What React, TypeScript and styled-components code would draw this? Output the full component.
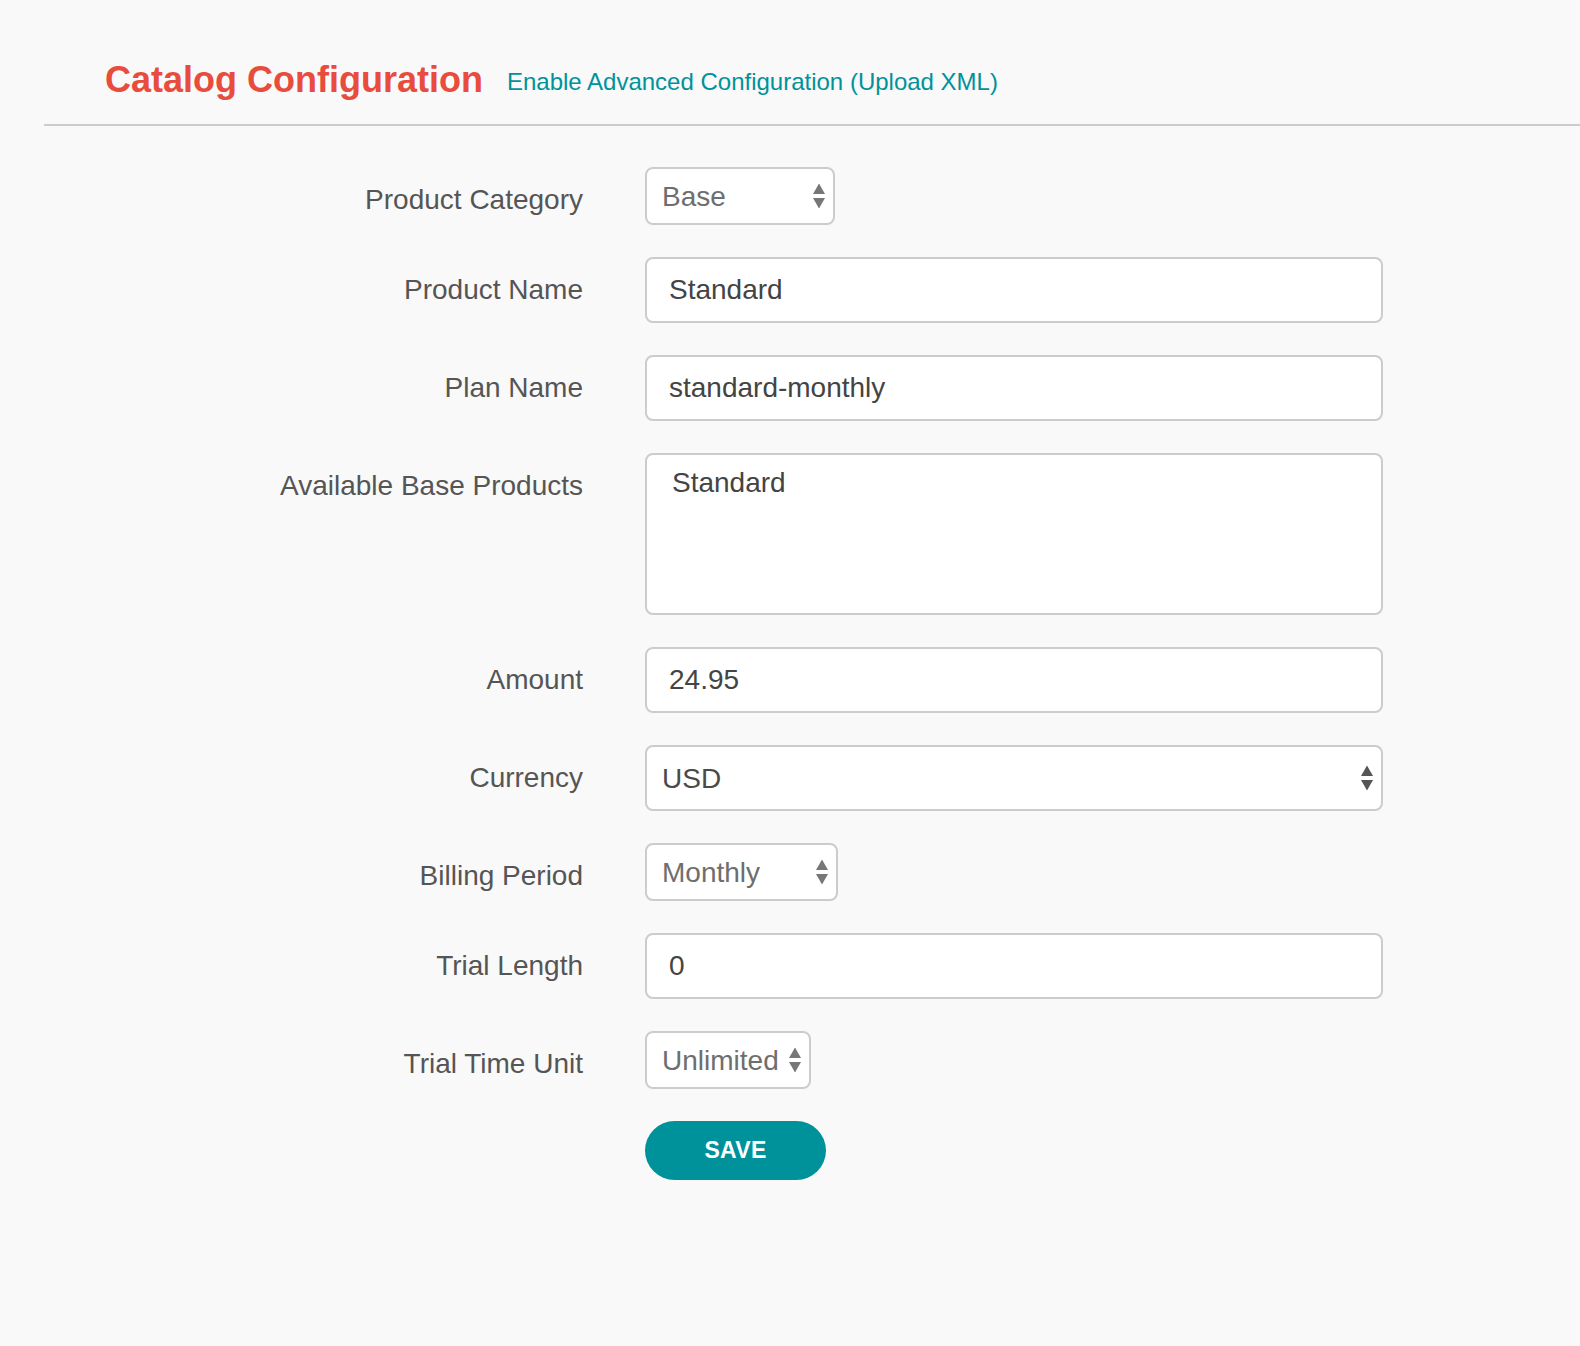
import React from "react";
import styled, { createGlobalStyle } from "styled-components";

const GlobalStyle = createGlobalStyle`
  html, body {
    margin: 0;
    padding: 0;
    background: #f9f9f9;
  }
  body {
    font-family: "Liberation Sans", Arial, Helvetica, sans-serif;
    -webkit-font-smoothing: antialiased;
  }
  * { box-sizing: border-box; }
`;

const Page = styled.div`
  min-height: 1346px;
  padding-left: 44px;
  background: #f9f9f9;
`;

const Header = styled.header`
  display: flex;
  align-items: flex-start;
  gap: 24px;
  padding: 60px 0 22px 61px;
  border-bottom: 2px solid #cccccc;
`;

const Title = styled.h1`
  margin: 0;
  font-size: 36px;
  line-height: 40px;
  font-weight: 700;
  color: #e74c3c;
`;

const AdvancedLink = styled.a`
  padding-top: 2px;
  font-size: 24px;
  line-height: 40px;
  color: #00929a;
  text-decoration: none;
  cursor: pointer;
`;

const Form = styled.form`
  display: flex;
  flex-direction: column;
  gap: 32px;
  padding-top: 41px;
`;

const Row = styled.div`
  display: grid;
  grid-template-columns: 539px 738px;
  column-gap: 62px;
  align-items: start;
`;

const Label = styled.label`
  text-align: right;
  font-size: 28px;
  line-height: 40px;
  padding-top: 13px;
  color: #555555;
`;

const TextInput = styled.input`
  display: block;
  width: 100%;
  height: 66px;
  padding: 0 22px;
  border: 2px solid #cccccc;
  border-radius: 8px;
  background: #ffffff;
  font-family: inherit;
  font-size: 28px;
  color: #444444;
  outline: none;
`;

const SelectWrap = styled.div<{ $width?: number }>`
  position: relative;
  width: ${(p) => (p.$width ? `${p.$width}px` : "100%")};
`;

const Select = styled.select<{ $tall?: boolean; $dark?: boolean }>`
  appearance: none;
  -webkit-appearance: none;
  display: block;
  width: 100%;
  height: ${(p) => (p.$tall ? "66px" : "58px")};
  padding: 0 26px 0 15px;
  border: 2px solid #cccccc;
  border-radius: 8px;
  background: #ffffff;
  font-family: inherit;
  font-size: 28px;
  color: ${(p) => (p.$dark ? "#4a4a4a" : "#6e6e6e")};
  outline: none;
`;

const Arrows = styled.svg<{ $right: number }>`
  position: absolute;
  top: 50%;
  right: ${(p) => p.$right}px;
  transform: translateY(-50%);
  pointer-events: none;
`;

const ListBox = styled.div`
  height: 162px;
  padding: 11px 25px;
  border: 2px solid #cccccc;
  border-radius: 8px;
  background: #ffffff;
`;

const ListOption = styled.div`
  font-size: 28px;
  line-height: 34px;
  color: #444444;
`;

const SaveButton = styled.button`
  width: 181px;
  height: 59px;
  border: none;
  border-radius: 30px;
  background: #00929a;
  color: #ffffff;
  font-family: inherit;
  font-size: 23px;
  font-weight: 700;
  letter-spacing: 0.3px;
  cursor: pointer;
`;

const SelectArrows = ({ color, right }: { color: string; right: number }) => (
  <Arrows $right={right} width="12" height="25" viewBox="0 0 12 25">
    <polygon points="6,0 12,10.5 0,10.5" fill={color} />
    <polygon points="0,14.5 12,14.5 6,25" fill={color} />
  </Arrows>
);

type SmallSelectProps = {
  id: string;
  width?: number;
  options: string[];
  dark?: boolean;
  tall?: boolean;
};

const FieldSelect = ({ id, width, options, dark, tall }: SmallSelectProps) => (
  <SelectWrap $width={width}>
    <Select id={id} $dark={dark} $tall={tall} defaultValue={options[0]}>
      {options.map((o) => (
        <option key={o}>{o}</option>
      ))}
    </Select>
    <SelectArrows color={dark ? "#555555" : "#777777"} right={10} />
  </SelectWrap>
);

export default function App() {
  return (
    <>
      <GlobalStyle />
      <Page>
        <Header>
          <Title>Catalog Configuration</Title>
          <AdvancedLink>Enable Advanced Configuration (Upload XML)</AdvancedLink>
        </Header>
        <Form onSubmit={(e) => e.preventDefault()}>
          <Row>
            <Label htmlFor="category">Product Category</Label>
            <FieldSelect id="category" width={190} options={["Base", "Add-On", "Standalone"]} />
          </Row>
          <Row>
            <Label htmlFor="productName">Product Name</Label>
            <TextInput id="productName" defaultValue="Standard" />
          </Row>
          <Row>
            <Label htmlFor="planName">Plan Name</Label>
            <TextInput id="planName" defaultValue="standard-monthly" />
          </Row>
          <Row>
            <Label>Available Base Products</Label>
            <ListBox role="listbox">
              <ListOption role="option">Standard</ListOption>
            </ListBox>
          </Row>
          <Row>
            <Label htmlFor="amount">Amount</Label>
            <TextInput id="amount" defaultValue="24.95" />
          </Row>
          <Row>
            <Label htmlFor="currency">Currency</Label>
            <FieldSelect id="currency" options={["USD", "EUR", "GBP"]} dark tall />
          </Row>
          <Row>
            <Label htmlFor="billing">Billing Period</Label>
            <FieldSelect id="billing" width={193} options={["Monthly", "Annual", "Quarterly"]} />
          </Row>
          <Row>
            <Label htmlFor="trialLength">Trial Length</Label>
            <TextInput id="trialLength" defaultValue="0" />
          </Row>
          <Row>
            <Label htmlFor="trialUnit">Trial Time Unit</Label>
            <FieldSelect id="trialUnit" width={166} options={["Unlimited", "Days", "Months"]} />
          </Row>
          <Row>
            <span />
            <div>
              <SaveButton type="submit">SAVE</SaveButton>
            </div>
          </Row>
        </Form>
      </Page>
    </>
  );
}
